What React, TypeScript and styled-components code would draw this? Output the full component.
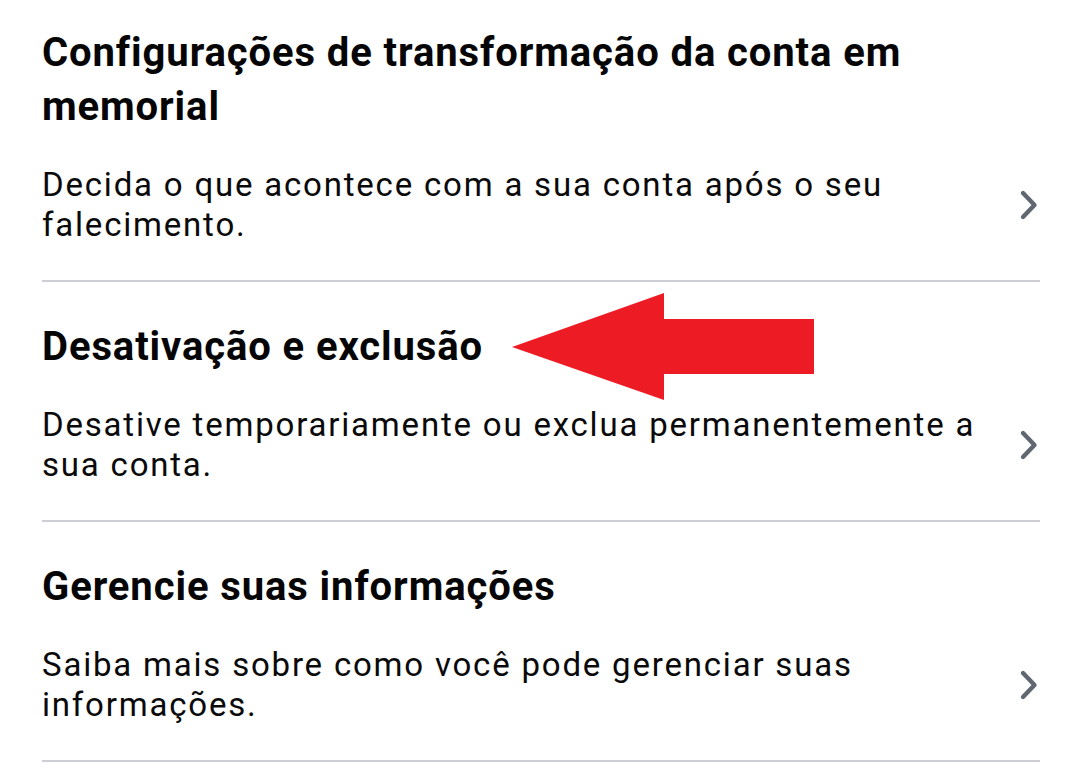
import React from "react"
import styled, { createGlobalStyle } from "styled-components"

const GlobalStyle = createGlobalStyle`
  body {
    margin: 0;
    background: #ffffff;
    font-family: Roboto, "Liberation Sans", sans-serif;
  }
`;

interface Setting {
  readonly id: number;
  title: string;
  description: string;
}

const settings: Setting[] = [
  {
    id: 1,
    title: "Configurações de transformação da conta em memorial",
    description: "Decida o que acontece com a sua conta após o seu falecimento.",
  },
  {
    id: 2,
    title: "Desativação e exclusão",
    description: "Desative temporariamente ou exclua permanentemente a sua conta.",
  },
  {
    id: 3,
    title: "Gerencie suas informações",
    description: "Saiba mais sobre como você pode gerenciar suas informações.",
  },
];

function Chevron() {
  return (
    <ChevronBox>
      <svg width="22" height="32" viewBox="0 0 22 32">
        <path
          d="M5 4 L16.5 16 L5 28"
          fill="none"
          stroke="#606770"
          strokeWidth="4.4"
          strokeLinecap="round"
          strokeLinejoin="round"
        />
      </svg>
    </ChevronBox>
  );
}

export default function App() {
  return (
    <Page>
      <GlobalStyle />
      <List>
        {settings.map((s) => (
          <Item key={s.id}>
            <Title>{s.title}</Title>
            <Row>
              <Description>{s.description}</Description>
              <Chevron />
            </Row>
          </Item>
        ))}
      </List>
      <Arrow viewBox="0 0 304 109" width="304" height="109">
        <polygon points="0,54 152,0 152,26 302,26 302,81 152,81 152,107" fill="#ed1c24" />
      </Arrow>
    </Page>
  );
}

const Page = styled.div`
  position: relative;
  width: 1079px;
  height: 770px;
  overflow: hidden;
`;

const List = styled.div`
  display: flex;
  flex-direction: column;
  padding: 0 39px 0 42px;
`;

const Item = styled.div`
  display: flex;
  flex-direction: column;
  gap: 31px;
  padding: 38px 0 35px;
  border-bottom: 2px solid #ccd0d5;

  &:first-child {
    padding-top: 26px;
  }
`;

const Title = styled.div`
  font-size: 40px;
  font-weight: 700;
  line-height: 54px;
  letter-spacing: 0.9px;
  color: #050505;
`;

const Row = styled.div`
  display: flex;
  align-items: center;
  justify-content: space-between;
`;

const Description = styled.div`
  max-width: 945px;
  font-size: 33px;
  font-weight: 400;
  line-height: 40px;
  letter-spacing: 1.8px;
  color: #0a0a0a;
`;

const ChevronBox = styled.div`
  display: flex;
  align-items: center;
`;

const Arrow = styled.svg`
  position: absolute;
  left: 512px;
  top: 293px;
`;
